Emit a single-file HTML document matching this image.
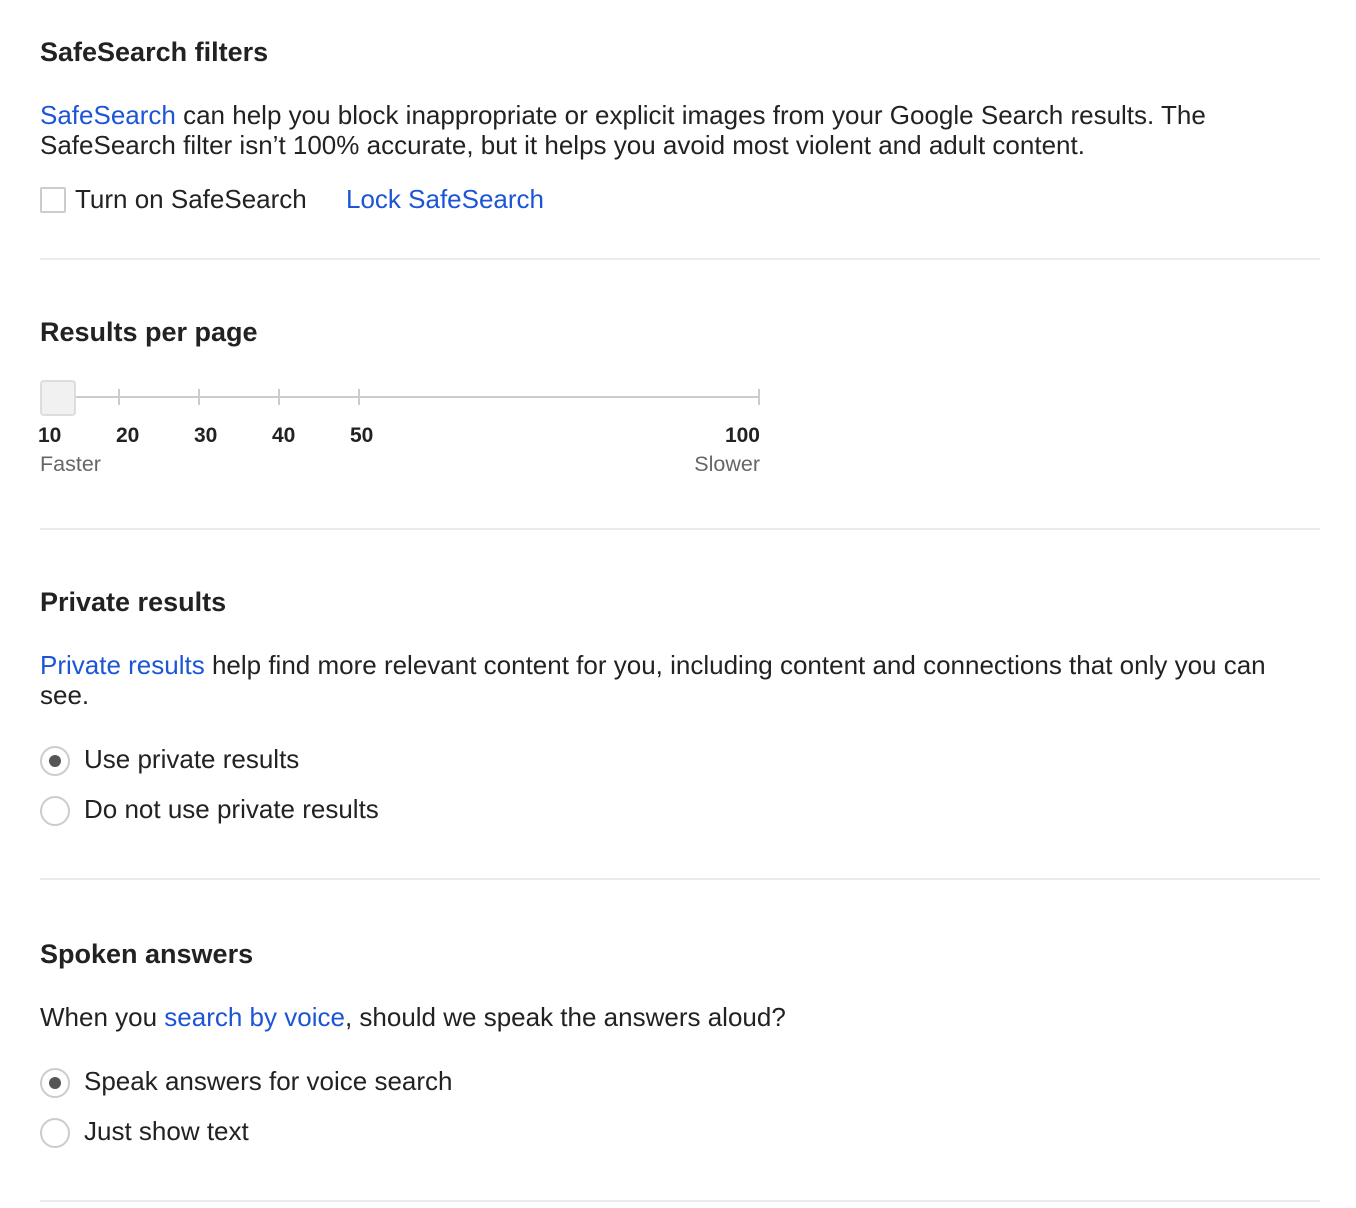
<!DOCTYPE html>
<html><head><meta charset="utf-8"><style>
body{margin:0;width:1356px;height:1208px;background:#fff;font-family:"Liberation Sans",Arial,sans-serif;color:#222;position:relative;overflow:hidden}
.a{position:absolute;white-space:nowrap}
h2{position:absolute;margin:0;font-size:27px;font-weight:bold;line-height:30px;left:40px;color:#222}
.t{font-size:26px;line-height:30px;left:40px}
a{color:#1c55d6;text-decoration:none}
.hr{position:absolute;left:40px;width:1280px;height:2px;background:#ebebeb}
.rad{position:absolute;left:40px;width:30px;height:30px;border:2px solid #ccc;border-radius:50%;box-sizing:border-box;background:#fff}
.rad.on::after{content:"";position:absolute;left:7px;top:7px;width:12px;height:12px;border-radius:50%;background:#555}
.num{position:absolute;font-size:21px;font-weight:bold;line-height:24px;color:#222}
.sub{position:absolute;font-size:21.5px;line-height:24px;color:#666}
.tick{position:absolute;top:389px;width:2px;height:16px;background:#ccc}
</style></head><body>
<h2 style="top:37px">SafeSearch filters</h2>
<div class="a t" style="top:100px"><a>SafeSearch</a> can help you block inappropriate or explicit images from your Google Search results. The</div>
<div class="a t" style="top:130px">SafeSearch filter isn’t 100% accurate, but it helps you avoid most violent and adult content.</div>
<div style="position:absolute;left:40px;top:187px;width:26px;height:26px;border:2px solid #ccc;box-sizing:border-box;border-radius:2px"></div>
<div class="a t" style="top:184px;left:75px">Turn on SafeSearch</div>
<div class="a t" style="top:184px;left:346px"><a>Lock SafeSearch</a></div>
<div class="hr" style="top:258px"></div>

<h2 style="top:317px">Results per page</h2>
<div style="position:absolute;left:60px;top:396px;width:700px;height:2px;background:#ccc"></div>
<div class="tick" style="left:118px"></div><div class="tick" style="left:198px"></div><div class="tick" style="left:278px"></div><div class="tick" style="left:358px"></div><div class="tick" style="left:758px"></div>
<div style="position:absolute;left:40px;top:380px;width:36px;height:36px;box-sizing:border-box;border:2px solid #ddd;border-radius:4px;background:#f1f1f1"></div>
<div class="num" style="left:38px;top:424px">10</div>
<div class="num" style="left:116px;top:424px">20</div>
<div class="num" style="left:194px;top:424px">30</div>
<div class="num" style="left:272px;top:424px">40</div>
<div class="num" style="left:350px;top:424px">50</div>
<div class="num" style="right:596px;top:424px">100</div>
<div class="sub" style="left:40px;top:452px">Faster</div>
<div class="sub" style="right:596px;top:452px">Slower</div>
<div class="hr" style="top:528px"></div>

<h2 style="top:587px">Private results</h2>
<div class="a t" style="top:650px"><a>Private results</a> help find more relevant content for you, including content and connections that only you can</div>
<div class="a t" style="top:680px">see.</div>
<div class="rad on" style="top:746px"></div>
<div class="a t" style="top:744px;left:84px">Use private results</div>
<div class="rad" style="top:796px"></div>
<div class="a t" style="top:794px;left:84px">Do not use private results</div>
<div class="hr" style="top:878px"></div>

<h2 style="top:939px">Spoken answers</h2>
<div class="a t" style="top:1002px">When you <a>search by voice</a>, should we speak the answers aloud?</div>
<div class="rad on" style="top:1068px"></div>
<div class="a t" style="top:1066px;left:84px">Speak answers for voice search</div>
<div class="rad" style="top:1118px"></div>
<div class="a t" style="top:1116px;left:84px">Just show text</div>
<div class="hr" style="top:1200px"></div>
</body></html>
